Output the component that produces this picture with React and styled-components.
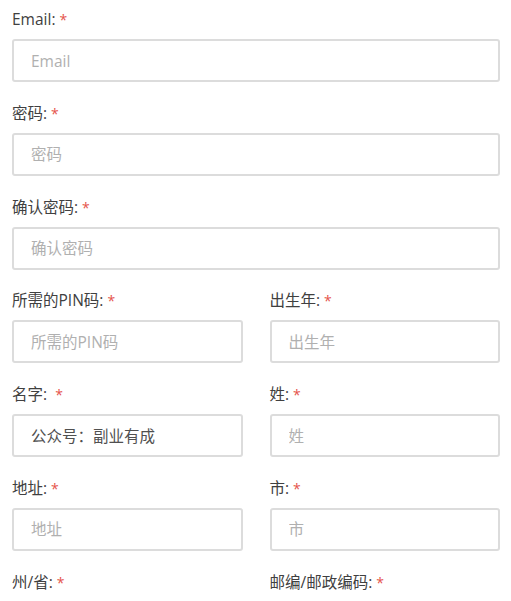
import React from "react";
import styled, { createGlobalStyle } from "styled-components";

const GlobalStyle = createGlobalStyle`
  body {
    margin: 0;
    background: #fff;
    font-family: "Open Sans", "Noto Sans CJK SC", sans-serif;
  }
`;

const fields = [
  [{ label: "Email:", placeholder: "Email" }],
  [{ label: "密码:", placeholder: "密码" }],
  [{ label: "确认密码:", placeholder: "确认密码" }],
  [
    { label: "所需的PIN码:", placeholder: "所需的PIN码" },
    { label: "出生年:", placeholder: "出生年" },
  ],
  [
    { label: "名字: ", placeholder: "名字", value: "公众号：副业有成" },
    { label: "姓:", placeholder: "姓" },
  ],
  [
    { label: "地址:", placeholder: "地址" },
    { label: "市:", placeholder: "市" },
  ],
  [
    { label: "州/省:", placeholder: "州/省" },
    { label: "邮编/邮政编码:", placeholder: "邮编/邮政编码" },
  ],
];

const App = () => {
  return (
    <>
      <GlobalStyle />
      <Form>
        {fields.map((row, i) => (
          <Row key={i} $cols={row.length}>
            {row.map((f) => (
              <Field key={f.label}>
                <Label>
                  {f.label} <Star>*</Star>
                </Label>
                <Input
                  placeholder={f.placeholder}
                  defaultValue={f.value}
                  readOnly
                />
              </Field>
            ))}
          </Row>
        ))}
      </Form>
    </>
  );
};

export default App;

const Form = styled.div`
  display: flex;
  flex-direction: column;
  gap: 20.8px;
  padding: 9px 11px 0 12px;
`;
const Row = styled.div`
  display: grid;
  grid-template-columns: repeat(${(p) => p.$cols}, 1fr);
  column-gap: 27px;
`;
const Field = styled.div`
  display: flex;
  flex-direction: column;
`;
const Label = styled.label`
  height: 20px;
  font-size: 15.5px;
  line-height: 20px;
  color: #404040;
  margin-bottom: 10px;
  white-space: pre;
  overflow: visible;
`;
const Star = styled.span`
  color: #e5534b;
  font-size: 14px;
`;
const Input = styled.input`
  box-sizing: border-box;
  width: 100%;
  height: 43px;
  border: 2px solid #dcdcdc;
  border-radius: 3px;
  padding: 0 17px;
  font-family: "Open Sans", "Noto Sans CJK SC", sans-serif;
  font-size: 15.5px;
  color: #505050;
  background: #fff;
  outline: none;
  &::placeholder {
    color: #b0b0b0;
  }
`;
